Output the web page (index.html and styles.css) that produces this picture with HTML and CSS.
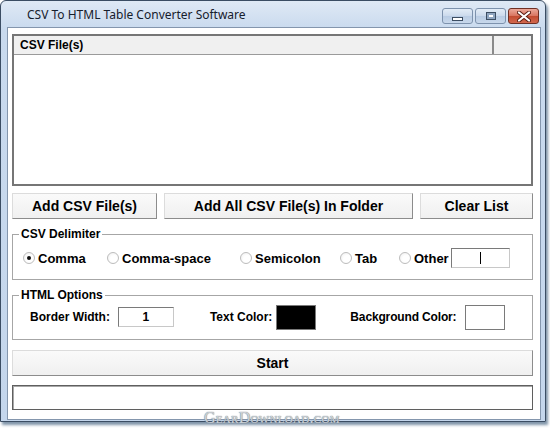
FILE: index.html
```html
<!DOCTYPE html>
<html lang="en">
<head>
    <meta charset="UTF-8">
    <title>CSV To HTML Table Converter Software</title>
    <link rel="stylesheet" href="styles.css">
</head>
<body>
    <div class="window">
        <!-- Title bar -->
        <div class="titlebar">
            <span class="title">CSV To HTML Table Converter Software</span>
            <div class="caption-buttons">
                <span class="cap min"><i></i></span>
                <span class="cap max"><i></i></span>
                <span class="cap close">
                    <svg width="14" height="11" viewBox="0 0 14 11">
                        <path d="M2 1.5 L12 9.5 M12 1.5 L2 9.5" stroke="#5a1d12" stroke-width="4" stroke-linecap="round"/>
                        <path d="M2 1.5 L12 9.5 M12 1.5 L2 9.5" stroke="#ffffff" stroke-width="2.2" stroke-linecap="round"/>
                    </svg>
                </span>
            </div>
        </div>

        <!-- Client area -->
        <div class="client">
            <div class="listbox">
                <div class="list-header">
                    <div class="col col-name">CSV File(s)</div>
                    <div class="col col-extra"></div>
                </div>
            </div>

            <div class="button-row">
                <button class="btn btn-add">Add CSV File(s)</button>
                <button class="btn btn-add-all">Add All CSV File(s) In Folder</button>
                <button class="btn btn-clear">Clear List</button>
            </div>

            <fieldset class="group group-delimiter">
                <legend>CSV Delimiter</legend>
                <div class="radio-row">
                    <label class="radio checked"><span class="circle"></span>Comma</label>
                    <label class="radio"><span class="circle"></span>Comma-space</label>
                    <label class="radio"><span class="circle"></span>Semicolon</label>
                    <label class="radio"><span class="circle"></span>Tab</label>
                    <label class="radio"><span class="circle"></span>Other</label>
                    <div class="field field-other"><span class="caret"></span></div>
                </div>
            </fieldset>

            <fieldset class="group group-html">
                <legend>HTML Options</legend>
                <div class="option-row">
                    <span class="opt-label">Border Width:</span>
                    <div class="field field-border">1</div>
                    <span class="opt-label label-text">Text Color:</span>
                    <div class="swatch swatch-black"></div>
                    <span class="opt-label label-bg">Background Color:</span>
                    <div class="swatch swatch-white"></div>
                </div>
            </fieldset>

            <button class="btn btn-start">Start</button>

            <div class="status"></div>
        </div>
    </div>

    <div class="watermark">GearDownload.com</div>
</body>
</html>
```

FILE: styles.css
```css
* {
    box-sizing: border-box;
}
body {
    margin: 0;
    width: 550px;
    height: 429px;
    overflow: hidden;
    position: relative;
    background-color: #fff;
    font-family: "Liberation Sans", Arial, sans-serif;
}
.window {
    width: 546px;
    height: 422px;
    border: 1px solid #3b4d63;
    border-radius: 6px 6px 0 0;
    background: linear-gradient(#dfe9f5, #c9daee 28px, #c4d6ec);
    padding: 0 4px 0 6px;
    display: flex;
    flex-direction: column;
    box-shadow: 2px 3px 3px rgba(40, 75, 110, 0.6);
}
.titlebar {
    height: 26px;
    display: flex;
    justify-content: space-between;
    align-items: flex-start;
}
.title {
    font-family: "Noto Sans", "Open Sans", sans-serif;
    font-size: 12px;
    color: #16202c;
    margin-left: 20px;
    margin-top: 5px;
}
.caption-buttons {
    display: flex;
    gap: 2px;
    margin-top: 7px;
    margin-right: 2px;
}
.cap {
    width: 31px;
    height: 16px;
    border: 1px solid #7d92ad;
    border-radius: 3px;
    background: linear-gradient(#e3ecf7, #cbdaec 50%, #b9cce4 51%, #c8d8eb);
    display: flex;
    justify-content: center;
    align-items: center;
}
.cap.min i {
    width: 11px;
    height: 4px;
    margin-top: 5px;
    border: 1px solid #3c4d62;
    background-color: #fff;
}
.cap.max i {
    width: 10px;
    height: 8px;
    border: 1px solid #3c4d62;
    background-color: #fff;
    box-shadow: inset 0 0 0 2px #8fa5c0;
}
.cap.close {
    border-color: #6f3024;
    background: linear-gradient(#eba899, #d8735f 50%, #c24a30 51%, #d3694f);
}
.client {
    flex: 1;
    margin-bottom: 1px;
    border: 1px solid #8496ad;
    background-color: #fff;
    padding: 6px 7px 7px 4px;
    display: flex;
    flex-direction: column;
}
.listbox {
    height: 152px;
    border: 2px solid #767676;
    background-color: #fff;
}
.list-header {
    height: 19px;
    display: flex;
    background-color: #f0f0f0;
    border-bottom: 1px solid #9a9a9a;
}
.col {
    font-size: 12px;
    font-weight: bold;
    line-height: 18px;
    padding-left: 6px;
}
.col-name {
    width: 480px;
    border-right: 2px solid #8a8a8a;
}
.col-extra {
    flex: 1;
}
.button-row {
    display: flex;
    gap: 7px;
    margin-top: 7px;
}
.btn {
    height: 26px;
    padding: 0;
    font-family: "Liberation Sans", Arial, sans-serif;
    font-size: 14px;
    font-weight: bold;
    color: #000;
    background: linear-gradient(#fafafa, #f0f0f0);
    border: 1px solid;
    border-color: #dcdcdc #8c8c8c #8c8c8c #dcdcdc;
}
.btn-add {
    width: 145px;
}
.btn-add-all {
    width: 249px;
}
.btn-clear {
    flex: 1;
}
.group {
    margin: 8px 0 0;
    padding: 7px 0 11px 6px;
    border: 1px solid #a6a6a6;
    min-width: 0;
}
.group legend {
    padding: 0 2px;
    font-size: 12px;
    font-weight: bold;
    line-height: 14px;
}
.group-html {
    padding-top: 3px;
    padding-bottom: 10px;
}
.radio-row {
    display: grid;
    grid-template-columns: 84px 133px 100px 59px 52px 59px;
    align-items: center;
    height: 20px;
    padding-left: 4px;
}
.radio {
    display: flex;
    align-items: center;
    font-size: 13px;
    font-weight: bold;
}
.circle {
    width: 12px;
    height: 12px;
    margin-right: 3px;
    border: 1px solid #bcbcbc;
    border-radius: 50%;
    background: radial-gradient(circle at 60% 60%, #fff 40%, #ececec);
    display: flex;
    justify-content: center;
    align-items: center;
}
.radio.checked .circle::after {
    content: "";
    width: 4px;
    height: 4px;
    border-radius: 50%;
    background-color: #111;
}
.field {
    height: 20px;
    border: 1px solid;
    border-color: #7a7a7a #c8c8c8 #c8c8c8 #7a7a7a;
    background-color: #fff;
    display: flex;
    justify-content: center;
    align-items: center;
    font-size: 12px;
    font-weight: bold;
}
.caret {
    width: 1px;
    height: 12px;
    background-color: #000;
}
.option-row {
    display: flex;
    align-items: center;
    height: 24px;
    padding-left: 11px;
}
.opt-label {
    font-size: 12px;
    font-weight: bold;
}
.field-border {
    width: 56px;
    margin-left: 8px;
}
.label-text {
    margin-left: 36px;
}
.swatch {
    width: 40px;
    height: 25px;
    border: 1px solid #7a7a7a;
}
.swatch-black {
    margin-left: 4px;
    background-color: #000;
}
.label-bg {
    margin-left: 34px;
    letter-spacing: -0.15px;
}
.swatch-white {
    margin-left: 9px;
    background-color: #fff;
}
.btn-start {
    width: 100%;
    margin-top: 10px;
}
.status {
    height: 25px;
    margin-top: 9px;
    border: 1px solid #5f5f5f;
    box-shadow: inset 1px 1px 0 #a8a8a8;
}
.watermark {
    position: absolute;
    left: 204px;
    top: 409px;
    font-family: "Liberation Serif", serif;
    font-size: 16px;
    font-variant: small-caps;
    letter-spacing: 0.3px;
    color: rgba(215, 220, 224, 0.9);
    text-shadow: 0 0 1px #7d8790, 0 0 1px #7d8790;
}
```
